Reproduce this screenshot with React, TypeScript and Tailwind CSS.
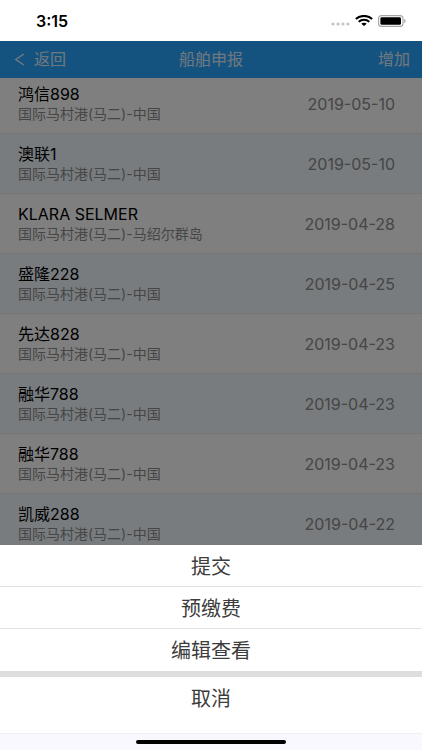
import clsx from "clsx";

type Ship = {
  name: string;
  route: string;
  date: string;
};

const ships: Ship[] = [
  { name: "鸿信898", route: "国际马村港(马二)-中国", date: "2019-05-10" },
  { name: "澳联1", route: "国际马村港(马二)-中国", date: "2019-05-10" },
  { name: "KLARA SELMER", route: "国际马村港(马二)-马绍尔群岛", date: "2019-04-28" },
  { name: "盛隆228", route: "国际马村港(马二)-中国", date: "2019-04-25" },
  { name: "先达828", route: "国际马村港(马二)-中国", date: "2019-04-23" },
  { name: "融华788", route: "国际马村港(马二)-中国", date: "2019-04-23" },
  { name: "融华788", route: "国际马村港(马二)-中国", date: "2019-04-23" },
  { name: "凯威288", route: "国际马村港(马二)-中国", date: "2019-04-22" },
];

const actions = ["提交", "预缴费", "编辑查看"];

function StatusBar() {
  return (
    <div className="flex h-[41px] shrink-0 items-center justify-between bg-white pr-4 pl-9">
      <span className="text-base font-semibold text-black">3:15</span>
      <div className="flex items-center gap-[5px]">
        <svg width="19" height="4" viewBox="0 0 19 4" fill="#c4c4c4" className="mt-[7px]">
          <circle cx="2" cy="2" r="1.6" />
          <circle cx="7" cy="2" r="1.6" />
          <circle cx="12" cy="2" r="1.6" />
          <circle cx="17" cy="2" r="1.6" />
        </svg>
        <svg width="18" height="11" viewBox="0 0 18 11" fill="none">
          <path d="M.8 3.900C5.300-.1 12.700-.1 17.200 3.900" stroke="#000" strokeWidth="2" />
          <path d="M3.700 6.700C6.700 4 11.300 4 14.300 6.700" stroke="#000" strokeWidth="1.900" />
          <path d="M9 10.900 6.300 8.700C7.800 7.300 10.200 7.300 11.700 8.700Z" fill="#000" />
        </svg>
        <svg width="28" height="12" viewBox="0 0 28 12" fill="none">
          <rect x=".6" y=".6" width="24.4" height="10.8" rx="3" stroke="#a6a6a6" strokeWidth="1.1" />
          <rect x="2.4" y="2.2" width="20.6" height="7.6" rx="1.4" fill="#000" />
          <path d="M26.2 4v4c.9-.3 1.4-1.1 1.4-2s-.5-1.700-1.400-2Z" fill="#a6a6a6" />
        </svg>
      </div>
    </div>
  );
}

function NavBar() {
  return (
    <header className="relative z-10 grid h-[37px] grid-cols-3 items-center bg-[#28a4ff] px-3 pb-0.5 text-base text-white/85">
      <button type="button" className="flex items-center gap-2 justify-self-start">
        <svg width="14" height="14" viewBox="0 0 14 14" fill="none" stroke="currentColor" strokeWidth="1.5">
          <path d="M11.800 2 3.800 7.500l8 5.500" />
        </svg>
        返回
      </button>
      <h1 className="justify-self-center">船舶申报</h1>
      <button type="button" className="justify-self-end">
        增加
      </button>
    </header>
  );
}

function ShipRow({ ship, shaded }: { ship: Ship; shaded: boolean }) {
  return (
    <li
      className={clsx(
        "flex h-[60px] items-center justify-between border-b border-[#ececec] pr-[27px] pl-[18px]",
        shaded ? "bg-[#f0f8ff]" : "bg-white"
      )}
    >
      <div className="flex flex-col">
        <span className="text-base leading-5 text-black">{ship.name}</span>
        <span className="text-sm leading-5 text-[#8c8c8c]">{ship.route}</span>
      </div>
      <time className="text-base text-[#8c8c8c]">{ship.date}</time>
    </li>
  );
}

function ActionSheet() {
  return (
    <div className="shrink-0 bg-white text-xl text-[#3c3c3c]">
      <div className="divide-y divide-[#e2e2e2]">
        {actions.map((label) => (
          <button key={label} type="button" className="block h-[42px] w-full pt-0.5">
            {label}
          </button>
        ))}
      </div>
      <div className="h-[6px] bg-[#dedede]" />
      <button type="button" className="block h-[42px] w-full pt-0.5">
        取消
      </button>
      <div className="mt-[14px] flex h-[17px] items-center justify-center border-t border-[#f0f0f0] bg-[#f9f8fe]">
        <div className="h-1 w-[150px] rounded-full bg-black" />
      </div>
    </div>
  );
}

export default function App() {
  return (
    <div className="flex h-screen flex-col overflow-hidden bg-white font-['Inter','Noto_Sans_CJK_SC',sans-serif]">
      <StatusBar />
      <main className="relative min-h-0 flex-1 overflow-hidden">
        <NavBar />
        {/* list is slightly scrolled under the nav bar */}
        <ul className="-mt-1">
          {ships.map((ship, i) => (
            <ShipRow key={i} ship={ship} shaded={i % 2 === 1} />
          ))}
        </ul>
        <div className="absolute inset-0 z-20 bg-black/50" />
      </main>
      <ActionSheet />
    </div>
  );
}
